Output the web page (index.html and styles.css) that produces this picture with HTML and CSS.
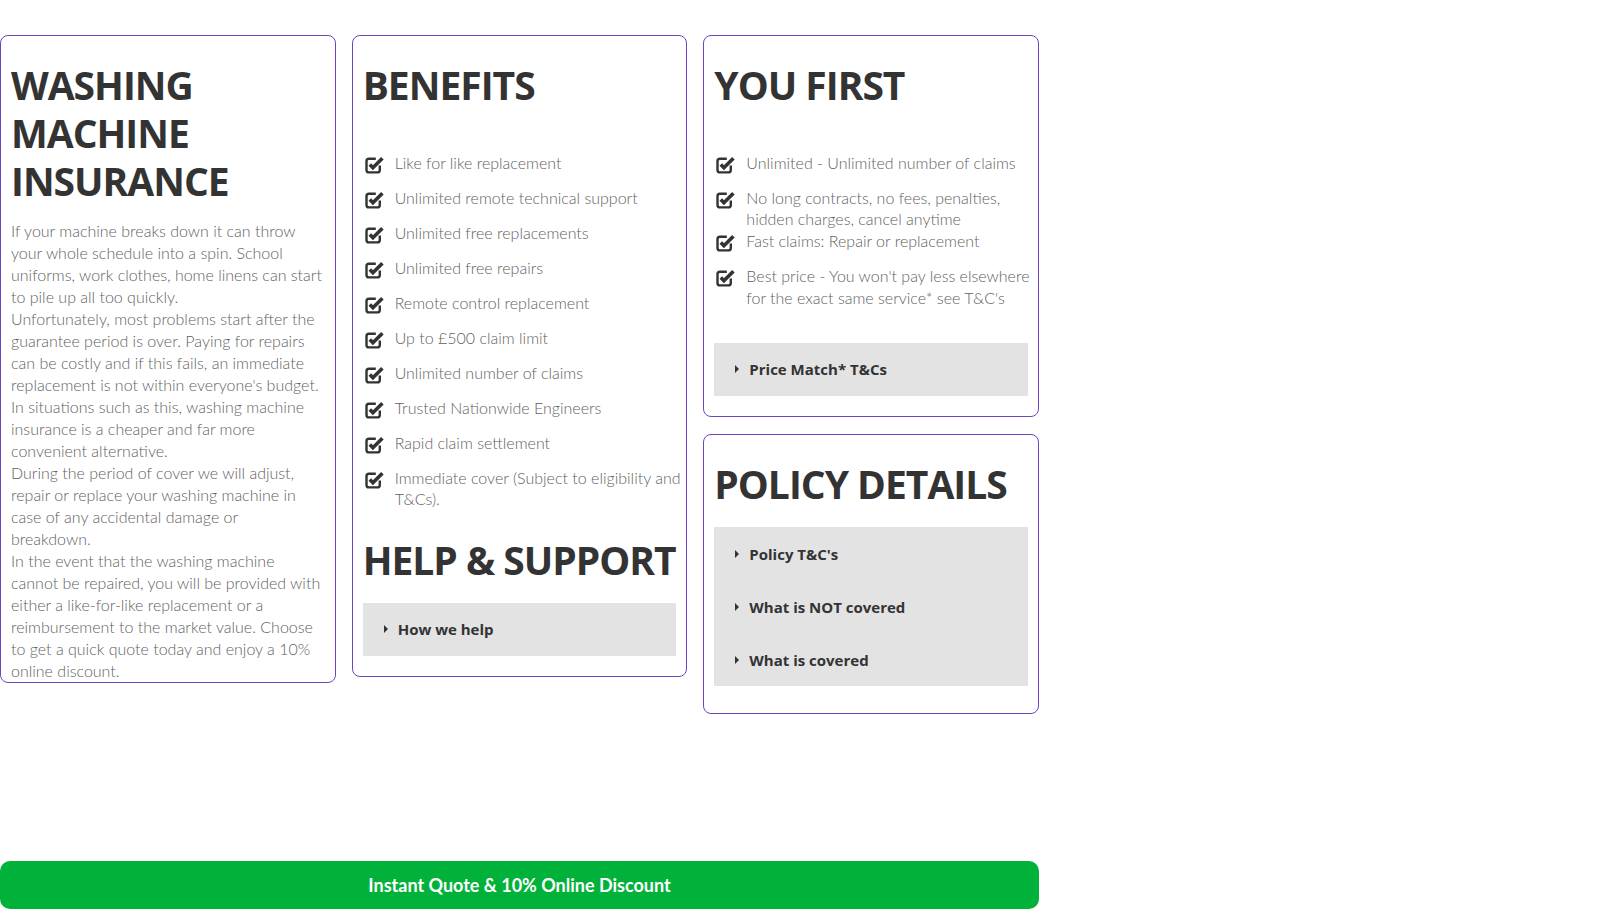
FILE: index.html
```html
<!DOCTYPE html>
<html lang="en">
<head>
<meta charset="utf-8">
<title>Washing Machine Insurance</title>
<link rel="stylesheet" href="styles.css">
</head>
<body>
<div class="page">
  <div class="grid">
    <section class="card card-intro">
      <h2 class="title">WASHING MACHINE INSURANCE</h2>
      <p class="intro">If your machine breaks down it can throw your whole schedule into a spin. School uniforms, work clothes, home linens can start to pile up all too quickly.<br>Unfortunately, most problems start after the guarantee period is over. Paying for repairs can be costly and if this fails, an immediate replacement is not within everyone's budget.<br>In situations such as this, washing machine insurance is a cheaper and far more convenient alternative.<br>During the period of cover we will adjust, repair or replace your washing machine in case of any accidental damage or<br>breakdown.<br>In the event that the washing machine cannot be repaired, you will be provided with either a like-for-like replacement or a reimbursement to the market value. Choose to get a quick quote today and enjoy a 10% online discount.</p>
    </section>

    <section class="card card-benefits">
      <h2 class="title title-list">BENEFITS</h2>
      <ul class="checks checks-benefits">
        <li><svg class="ico" viewBox="0 0 23 23"><path class="box" d="M12.8 6.7H6Q3.5 6.7 3.5 9.2V17.9Q3.5 20.4 6 20.4H14.3Q16.8 20.4 16.8 17.9V13.6"/><path class="tick" d="M6.8 12.6L9.9 15.8L19.4 6.3"/></svg><span>Like for like replacement</span></li>
        <li><svg class="ico" viewBox="0 0 23 23"><path class="box" d="M12.8 6.7H6Q3.5 6.7 3.5 9.2V17.9Q3.5 20.4 6 20.4H14.3Q16.8 20.4 16.8 17.9V13.6"/><path class="tick" d="M6.8 12.6L9.9 15.8L19.4 6.3"/></svg><span>Unlimited remote technical support</span></li>
        <li><svg class="ico" viewBox="0 0 23 23"><path class="box" d="M12.8 6.7H6Q3.5 6.7 3.5 9.2V17.9Q3.5 20.4 6 20.4H14.3Q16.8 20.4 16.8 17.9V13.6"/><path class="tick" d="M6.8 12.6L9.9 15.8L19.4 6.3"/></svg><span>Unlimited free replacements</span></li>
        <li><svg class="ico" viewBox="0 0 23 23"><path class="box" d="M12.8 6.7H6Q3.5 6.7 3.5 9.2V17.9Q3.5 20.4 6 20.4H14.3Q16.8 20.4 16.8 17.9V13.6"/><path class="tick" d="M6.8 12.6L9.9 15.8L19.4 6.3"/></svg><span>Unlimited free repairs</span></li>
        <li><svg class="ico" viewBox="0 0 23 23"><path class="box" d="M12.8 6.7H6Q3.5 6.7 3.5 9.2V17.9Q3.5 20.4 6 20.4H14.3Q16.8 20.4 16.8 17.9V13.6"/><path class="tick" d="M6.8 12.6L9.9 15.8L19.4 6.3"/></svg><span>Remote control replacement</span></li>
        <li><svg class="ico" viewBox="0 0 23 23"><path class="box" d="M12.8 6.7H6Q3.5 6.7 3.5 9.2V17.9Q3.5 20.4 6 20.4H14.3Q16.8 20.4 16.8 17.9V13.6"/><path class="tick" d="M6.8 12.6L9.9 15.8L19.4 6.3"/></svg><span>Up to £500 claim limit</span></li>
        <li><svg class="ico" viewBox="0 0 23 23"><path class="box" d="M12.8 6.7H6Q3.5 6.7 3.5 9.2V17.9Q3.5 20.4 6 20.4H14.3Q16.8 20.4 16.8 17.9V13.6"/><path class="tick" d="M6.8 12.6L9.9 15.8L19.4 6.3"/></svg><span>Unlimited number of claims</span></li>
        <li><svg class="ico" viewBox="0 0 23 23"><path class="box" d="M12.8 6.7H6Q3.5 6.7 3.5 9.2V17.9Q3.5 20.4 6 20.4H14.3Q16.8 20.4 16.8 17.9V13.6"/><path class="tick" d="M6.8 12.6L9.9 15.8L19.4 6.3"/></svg><span>Trusted Nationwide Engineers</span></li>
        <li><svg class="ico" viewBox="0 0 23 23"><path class="box" d="M12.8 6.7H6Q3.5 6.7 3.5 9.2V17.9Q3.5 20.4 6 20.4H14.3Q16.8 20.4 16.8 17.9V13.6"/><path class="tick" d="M6.8 12.6L9.9 15.8L19.4 6.3"/></svg><span>Rapid claim settlement</span></li>
        <li><svg class="ico" viewBox="0 0 23 23"><path class="box" d="M12.8 6.7H6Q3.5 6.7 3.5 9.2V17.9Q3.5 20.4 6 20.4H14.3Q16.8 20.4 16.8 17.9V13.6"/><path class="tick" d="M6.8 12.6L9.9 15.8L19.4 6.3"/></svg><span>Immediate cover (Subject to eligibility and T&amp;Cs).</span></li>
      </ul>
      <h2 class="title title-help">HELP &amp; SUPPORT</h2>
      <div class="accordion">
        <div class="acc-item"><span class="caret"></span>How we help</div>
      </div>
    </section>

    <div class="stack">
      <section class="card card-first">
        <h2 class="title title-list">YOU FIRST</h2>
        <ul class="checks checks-first">
          <li><svg class="ico" viewBox="0 0 23 23"><path class="box" d="M12.8 6.7H6Q3.5 6.7 3.5 9.2V17.9Q3.5 20.4 6 20.4H14.3Q16.8 20.4 16.8 17.9V13.6"/><path class="tick" d="M6.8 12.6L9.9 15.8L19.4 6.3"/></svg><span>Unlimited - Unlimited number of claims</span></li>
          <li><svg class="ico" viewBox="0 0 23 23"><path class="box" d="M12.8 6.7H6Q3.5 6.7 3.5 9.2V17.9Q3.5 20.4 6 20.4H14.3Q16.8 20.4 16.8 17.9V13.6"/><path class="tick" d="M6.8 12.6L9.9 15.8L19.4 6.3"/></svg><span>No long contracts, no fees, penalties, hidden charges, cancel anytime</span></li>
          <li><svg class="ico" viewBox="0 0 23 23"><path class="box" d="M12.8 6.7H6Q3.5 6.7 3.5 9.2V17.9Q3.5 20.4 6 20.4H14.3Q16.8 20.4 16.8 17.9V13.6"/><path class="tick" d="M6.8 12.6L9.9 15.8L19.4 6.3"/></svg><span>Fast claims: Repair or replacement</span></li>
          <li><svg class="ico" viewBox="0 0 23 23"><path class="box" d="M12.8 6.7H6Q3.5 6.7 3.5 9.2V17.9Q3.5 20.4 6 20.4H14.3Q16.8 20.4 16.8 17.9V13.6"/><path class="tick" d="M6.8 12.6L9.9 15.8L19.4 6.3"/></svg><span>Best price - You won't pay less elsewhere for the exact same service* see T&amp;C's</span></li>
        </ul>
        <div class="accordion">
          <div class="acc-item"><span class="caret"></span>Price Match* T&amp;Cs</div>
        </div>
      </section>

      <section class="card card-policy">
        <h2 class="title title-policy">POLICY DETAILS</h2>
        <div class="accordion accordion-policy">
          <div class="acc-item"><span class="caret"></span>Policy T&amp;C's</div>
          <div class="acc-item"><span class="caret"></span>What is NOT covered</div>
          <div class="acc-item"><span class="caret"></span>What is covered</div>
        </div>
      </section>
    </div>
  </div>

  <a class="cta" href="#">Instant Quote &amp; 10% Online Discount</a>
</div>
</body>
</html>
```

FILE: styles.css
```css
* { box-sizing: border-box; }

html, body {
  margin: 0;
  padding: 0;
  background: #fff;
}

body {
  font-family: "Lato", "Liberation Sans", sans-serif;
  color: #666;
}

.page {
  width: 1039px;
  min-height: 100vh;
  display: flex;
  flex-direction: column;
  padding-top: 35px;
  padding-bottom: 3px;
}

.grid {
  display: grid;
  grid-template-columns: repeat(3, 1fr);
  column-gap: 16px;
  align-items: start;
}

.stack {
  display: flex;
  flex-direction: column;
  gap: 17px;
}

.card {
  border: 1px solid #6f44c4;
  border-radius: 8px;
  padding: 10px 10px 0;
  background: #fff;
}

.title {
  font-family: "Open Sans", "Liberation Sans", sans-serif;
  font-weight: 700;
  font-size: 39px;
  letter-spacing: -1px;
  line-height: 48px;
  color: #333;
  margin: 15px 0 15px;
}

.title-list { margin-bottom: 42.6px; }
.title-help { margin: 0 0 19px; }
.title-policy { margin-bottom: 19.7px; }

.intro {
  margin: 0;
  font-size: 16px;
  line-height: 22px;
  font-weight: 300;
  color: #5f5f5f;
}

.checks {
  list-style: none;
  margin: 0 -10px 0 0;
  padding: 0;
  font-size: 16px;
  line-height: 21.8px;
  font-weight: 300;
  color: #5f5f5f;
}

.checks li {
  display: flex;
  align-items: flex-start;
  min-height: 35px;
}

.checks li span { flex: 1; }

.checks-benefits { margin-bottom: 25.4px; }
.checks-first { margin-bottom: 33.9px; }

.ico {
  width: 23px;
  height: 23px;
  flex: none;
  margin-right: 9px;
}

.ico .box {
  fill: none;
  stroke: #333;
  stroke-width: 2.4;
}

.ico .tick {
  fill: none;
  stroke: #333;
  stroke-width: 3.6;
  stroke-linejoin: miter;
}

.accordion {
  background: #e3e3e3;
  margin-bottom: 20px;
}

.accordion-policy { margin-bottom: 26.3px; }

.acc-item {
  height: 53px;
  display: flex;
  align-items: center;
  padding-left: 21px;
  font-family: "Open Sans", "Liberation Sans", sans-serif;
  font-weight: 700;
  font-size: 15px;
  color: #333;
}

.caret {
  width: 0;
  height: 0;
  border-left: 4.5px solid #333;
  border-top: 4px solid transparent;
  border-bottom: 4px solid transparent;
  margin-right: 10px;
}

.cta {
  margin-top: auto;
  height: 48px;
  border-radius: 10px;
  background: #00b23a;
  color: #fff;
  text-decoration: none;
  display: flex;
  align-items: center;
  justify-content: center;
  font-family: "Lato", "Liberation Sans", sans-serif;
  font-weight: 700;
  font-size: 18px;
}
```
